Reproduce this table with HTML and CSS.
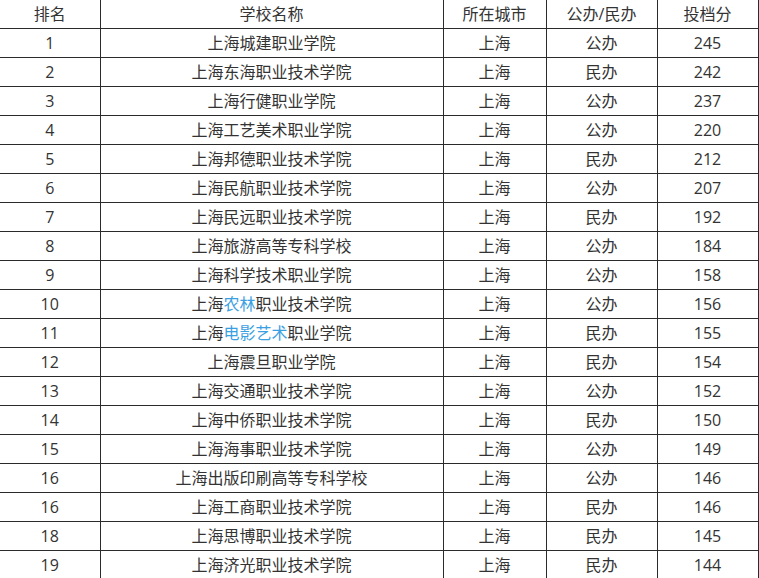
FILE: index.html
```html
<!DOCTYPE html>
<html lang="zh-CN">
<head>
<meta charset="utf-8">
<title>上海高职院校投档分</title>
<link rel="stylesheet" href="styles.css">
</head>
<body>
<table class="rank-table">
  <colgroup>
    <col class="c-rank">
    <col class="c-name">
    <col class="c-city">
    <col class="c-type">
    <col class="c-score">
  </colgroup>
  <thead>
    <tr><th>排名</th><th>学校名称</th><th>所在城市</th><th>公办/民办</th><th>投档分</th></tr>
  </thead>
  <tbody>
    <tr><td>1</td><td>上海城建职业学院</td><td>上海</td><td>公办</td><td>245</td></tr>
    <tr><td>2</td><td>上海东海职业技术学院</td><td>上海</td><td>民办</td><td>242</td></tr>
    <tr><td>3</td><td>上海行健职业学院</td><td>上海</td><td>公办</td><td>237</td></tr>
    <tr><td>4</td><td>上海工艺美术职业学院</td><td>上海</td><td>公办</td><td>220</td></tr>
    <tr><td>5</td><td>上海邦德职业技术学院</td><td>上海</td><td>民办</td><td>212</td></tr>
    <tr><td>6</td><td>上海民航职业技术学院</td><td>上海</td><td>公办</td><td>207</td></tr>
    <tr><td>7</td><td>上海民远职业技术学院</td><td>上海</td><td>民办</td><td>192</td></tr>
    <tr><td>8</td><td>上海旅游高等专科学校</td><td>上海</td><td>公办</td><td>184</td></tr>
    <tr><td>9</td><td>上海科学技术职业学院</td><td>上海</td><td>公办</td><td>158</td></tr>
    <tr><td>10</td><td>上海<span class="kw">农林</span>职业技术学院</td><td>上海</td><td>公办</td><td>156</td></tr>
    <tr><td>11</td><td>上海<span class="kw">电影艺术</span>职业学院</td><td>上海</td><td>民办</td><td>155</td></tr>
    <tr><td>12</td><td>上海震旦职业学院</td><td>上海</td><td>民办</td><td>154</td></tr>
    <tr><td>13</td><td>上海交通职业技术学院</td><td>上海</td><td>公办</td><td>152</td></tr>
    <tr><td>14</td><td>上海中侨职业技术学院</td><td>上海</td><td>民办</td><td>150</td></tr>
    <tr><td>15</td><td>上海海事职业技术学院</td><td>上海</td><td>公办</td><td>149</td></tr>
    <tr><td>16</td><td>上海出版印刷高等专科学校</td><td>上海</td><td>公办</td><td>146</td></tr>
    <tr><td>16</td><td>上海工商职业技术学院</td><td>上海</td><td>民办</td><td>146</td></tr>
    <tr><td>18</td><td>上海思博职业技术学院</td><td>上海</td><td>民办</td><td>145</td></tr>
    <tr><td>19</td><td>上海济光职业技术学院</td><td>上海</td><td>民办</td><td>144</td></tr>
  </tbody>
</table>
</body>
</html>
```
FILE: styles.css
```css
html, body {
  margin: 0;
  padding: 0;
  background: #fff;
}
body {
  font-family: "Open Sans", "Noto Sans CJK SC", sans-serif;
  font-size: 16px;
  color: #333;
}
.rank-table {
  border-collapse: collapse;
  table-layout: fixed;
  width: 758px;
}
.c-rank { width: 100px; }
.c-name { width: 343px; }
.c-city { width: 103px; }
.c-type { width: 111px; }
.c-score { width: 101px; }
.rank-table th,
.rank-table td {
  border: 1px solid #2b2b2b;
  padding: 0;
  height: 28px;
  line-height: 28px;
  text-align: center;
  font-weight: normal;
  white-space: nowrap;
}
.rank-table tr > :first-child { border-left: none; }
.rank-table thead th { border-top: none; }
.kw { color: #3ba0e2; }
```
